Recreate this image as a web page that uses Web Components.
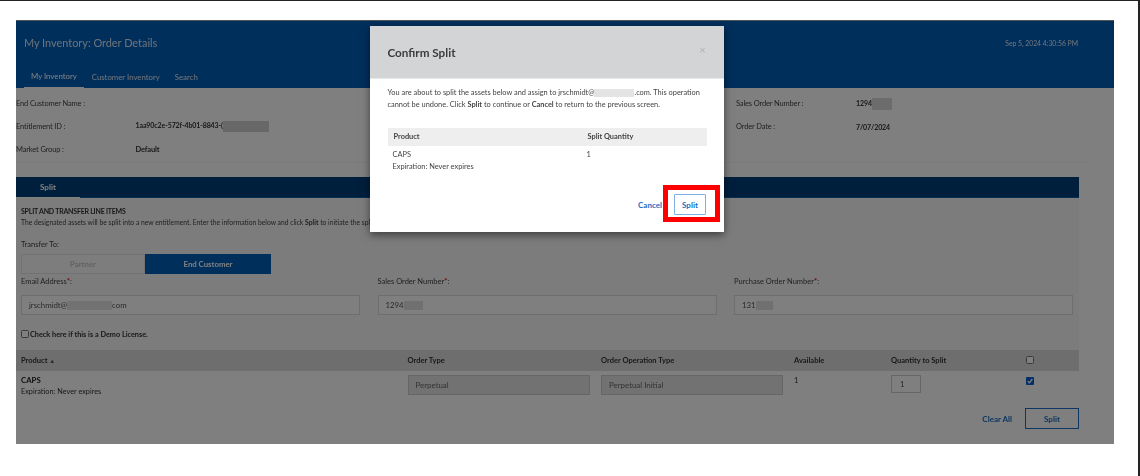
<!DOCTYPE html>
<html lang="en"><head><meta charset="utf-8"><title>Confirm Split</title>
<style>
html,body{margin:0;padding:0;background:#fff}
body{font-family:Lato,"Liberation Sans",sans-serif;font-size:8px;color:#333}
</style></head>
<body>
<inv-frame>
  <inv-app>
    <inv-header slot="top" heading="My Inventory: Order Details" stamp="Sep 5, 2024 4:30:56 PM"></inv-header>
    <inv-info></inv-info>
    <inv-split></inv-split>
    <inv-lines></inv-lines>
    <inv-confirm></inv-confirm>
  </inv-app>
</inv-frame>
<script>
function def(name, css, html, setup){
  customElements.define(name, class extends HTMLElement{
    constructor(){super();const s=this.attachShadow({mode:'open'});
      s.innerHTML='<style>'+css+'</style>'+(typeof html==='function'?html(this):html);}
    connectedCallback(){ if(setup) setup(this); }
  });
}
const redact=(w,h,c)=>`<span style="display:inline-block;vertical-align:middle;width:${w}px;height:${h}px;background:${c}"></span>`;
const soft='filter:blur(.3px);';

def('inv-frame',`:host{display:block;box-sizing:border-box;width:1140px;height:476px;border-top:1px solid #222;border-right:2px solid #222;padding:19px 24px 0 16px}`,`<slot></slot>`);
def('inv-app',`:host{display:block;position:relative;height:423px;border-top:1px solid #555;background:#fff;font-family:Lato,"Liberation Sans",sans-serif;color:#444}`,`<slot name="top"></slot><slot></slot>`);

def('inv-header',`:host{display:flex;flex-direction:column;height:67px;box-sizing:border-box;background:#005eb8;padding:0 36px 0 8px;color:#fff;${soft}}
.top{display:flex;justify-content:space-between;align-items:center;height:43px}
h1{margin:0;font-size:10.9px;font-weight:400;color:#d8e4f2}
.st{font-size:6.8px;color:#dfe8f4}
nav{display:flex;margin-top:auto;height:23px}
a{display:flex;align-items:center;padding:0 7px;font-size:7.8px;color:#dfe8f4;box-sizing:border-box;margin-right:1px}
a.on{border-bottom:1px solid #fff;color:#fff}`,
el=>`<div class="top"><h1>${el.getAttribute('heading')}</h1><span class="st">${el.getAttribute('stamp')}</span></div>
<nav><a class="on">My Inventory</a><a>Customer Inventory</a><a>Search</a></nav>`);

def('inv-info',`:host{display:grid;grid-template-columns:119.5px 600.5px 120px 1fr;grid-auto-rows:23px;box-sizing:border-box;width:1071px;height:75px;padding-top:4px;border-bottom:1px solid #f4f4f4;font-size:7.5px;letter-spacing:-.15px;align-items:center;${soft}}
.v{font-weight:700;color:#333}.k{color:#444}.n{font-size:7px;letter-spacing:-.1px}`,
`<span class="k">End Customer Name :</span><span></span><span class="k">Sales Order Number :</span><span class="v n">1294${redact(20,12,'#d8d8d8')}</span>
<span class="k">Entitlement ID :</span><span class="v n">1aa90c2e-572f-4b01-8843-(${redact(46,11,'#d0d0d0')}</span><span class="k">Order Date :</span><span class="v n">7/07/2024</span>
<span class="k">Market Group :</span><span class="v">Default</span><span></span><span></span>`);

def('inv-split',`:host{display:block;box-sizing:border-box;width:1063px;margin-top:14px;background:#f8f8f8;height:173px;font-size:7.5px;color:#444;${soft}}
.bar{height:21px;background:#003f78;box-sizing:border-box;border-bottom:1px solid #0a5ca8}
.tab{display:flex;align-items:center;justify-content:center;width:64px;height:21px;box-sizing:border-box;border-bottom:1px solid #fff;color:#fff;font-weight:700;font-size:8px}
.b{padding:8px 5px 0;display:flex;flex-direction:column}
.t{font-weight:700;font-size:7px;letter-spacing:-.22px;color:#333;line-height:10px;margin-bottom:1px}
.d{line-height:10px;font-size:6.76px;white-space:nowrap}
.d b,.l b{font-weight:700}
.l{line-height:10px}
.tt{margin-top:13px}
.tog{display:flex;width:250px;height:20px;margin-top:4px;font-weight:700;font-size:7.8px}
.tog span{flex:1;display:flex;align-items:center;justify-content:center;box-sizing:border-box}
.tog .p{border:1px solid #e4e4e4;background:#fbfbfb;color:#c4c4c4;flex:none;width:124px}
.e{background:#005eb8;color:#fff}
.fs{display:grid;grid-template-columns:339px 339px 339px;column-gap:17.5px;margin-top:3px}
.fs i{color:#d00;font-style:normal;font-weight:700}
.in{display:flex;align-items:center;height:20px;margin-top:8px;padding:0 7px;border:1px solid #dcdcdc;background:#fff;box-sizing:border-box;font-size:7.8px;color:#555}
.ck{display:flex;align-items:center;margin-top:14px;height:10px;font-weight:700;color:#333;font-size:7.3px}
.box{box-sizing:border-box;width:8px;height:8px;border:1px solid #777;border-radius:1.5px;background:#fff;margin-right:1px}`,
`<div class="bar"><div class="tab">Split</div></div>
<div class="b">
<div class="t">SPLIT AND TRANSFER LINE ITEMS</div>
<div class="d">The designated assets will be split into a new entitlement. Enter the information below and click <b>Split</b> to initiate the split process.</div>
<div class="l tt">Transfer To:</div>
<div class="tog"><span class="p">Partner</span><span class="e">End Customer</span></div>
<div class="fs">
<div><div class="l">Email Address<i>*</i>:</div><div class="in">jrschmidt@${redact(45,9,'#e4e4e4')}com</div></div>
<div><div class="l">Sales Order Number<i>*</i>:</div><div class="in">1294${redact(19,9,'#e0e0e0')}</div></div>
<div><div class="l">Purchase Order Number<i>*</i>:</div><div class="in">131${redact(17,9,'#e0e0e0')}</div></div>
</div>
<div class="ck"><span class="box"></span>Check here if this is a Demo License.</div>
</div>`);

def('inv-lines',`:host{display:block;font-size:7.5px;color:#333;${soft}}
.g{display:grid;grid-template-columns:386.5px 193.5px 193px 97px 135px 1fr;padding-left:5px;width:1058px;box-sizing:border-box}
.h{height:21px;background:#dcdcde;align-items:center;width:1063px;font-weight:700}
.r{height:37px;padding-top:4px;align-items:start}
.n{line-height:11px;font-size:7.3px}
.n b{color:#222;font-size:7.8px}
.ex{color:#333}
.ro{display:flex;align-items:center;box-sizing:border-box;width:182px;height:20px;padding:0 7px;border:1px solid #ccc;background:#e4e4e4;color:#666;font-size:7.9px}
.q{display:flex;align-items:center;box-sizing:border-box;width:30px;height:18px;padding:0 8px;border:1px solid #ccc;background:#fff;color:#444}
.cb{display:block;box-sizing:border-box;width:8px;height:8px;border:1px solid #777;border-radius:1.5px;background:#fff;margin-top:-2px}
.ckd{width:8px;height:8px;margin-top:2px}
.f{display:flex;justify-content:flex-end;align-items:center;width:1063px;height:21px;font-weight:700;color:#1a6cc0;font-size:8px}
.btn{display:flex;align-items:center;justify-content:center;width:54px;height:21px;margin-left:13px;box-sizing:border-box;border:1px solid #1a6cc0;background:#fff}
.av{padding-top:1px}
.so{font-size:6px;color:#555}`,
`<div class="g h"><span>Product <span class="so">▲</span></span><span>Order Type</span><span>Order Operation Type</span><span>Available</span><span>Quantity to Split</span><span class="cb"></span></div>
<div class="g r"><div class="n"><b>CAPS</b><br><span class="ex">Expiration: Never expires</span></div><div class="ro">Perpetual</div><div class="ro">Perpetual Initial</div><div class="av">1</div><div class="q">1</div>
<svg class="ckd" viewBox="0 0 8 8"><rect width="8" height="8" rx="1" fill="#0a5fd0"/><path d="M1.8 4.2 3.4 5.8 6.3 2" fill="none" stroke="#fff" stroke-width="1.3"/></svg></div>
<div class="f"><span>Clear All</span><span class="btn">Split</span></div>`);

def('inv-confirm',`:host{position:absolute;inset:0;background:rgba(0,0,0,.5);display:block}
.m{position:absolute;left:353.5px;top:5px;width:354.5px;height:206px;background:#fff;box-shadow:0 3px 8px rgba(0,0,0,.5);color:#444;font-size:7.4px;display:flex;flex-direction:column}
.hd{display:flex;justify-content:space-between;height:53px;box-sizing:border-box;background:#d3d4d6;border-bottom:1px solid #e8e8e8;padding:0 18px;align-items:center;${soft}}
h2{margin:0;font-size:11.7px;font-weight:700;color:#3c3c3c}
.x{font-size:12px;color:#b4b4b4;margin-bottom:6px}
.bd{padding:8px 18px 0;line-height:11.5px;${soft}}
.bd b{font-weight:700}
.ln{white-space:nowrap}
table{border-collapse:collapse;width:319px;margin-top:18px;table-layout:fixed}
th{background:#eeeeef;height:18px;text-align:left;font-weight:700;padding:0 6px;color:#444}
td{padding:3px 5px;vertical-align:top;line-height:11.5px}
.ft{position:relative;display:flex;justify-content:flex-end;align-items:center;margin:auto 18px 17px;height:21px;font-weight:700;color:#1a6cc0;font-size:8px}
.ok{display:flex;align-items:center;justify-content:center;width:32px;height:21px;margin-left:12px;box-sizing:border-box;border:1px solid #7fb0e0;background:#fff;border-radius:1px}
.mark{position:absolute;right:-14px;top:-9px;width:57px;height:37px;box-sizing:border-box;border:5.5px solid #f00}`,
`<div class="m" role="dialog">
<div class="hd"><h2>Confirm Split</h2><span class="x">×</span></div>
<div class="bd"><div class="ln">You are about to split the assets below and assign to jrschmidt@${redact(40,8,'#e4e4e4')}.com. This operation</div><div class="ln">cannot be undone. Click <b>Split</b> to continue or <b>Cancel</b> to return to the previous screen.</div>
<table><colgroup><col style="width:194px"><col></colgroup><tr><th>Product</th><th>Split Quantity</th></tr><tr><td><div>CAPS</div><div>Expiration: Never expires</div></td><td>1</td></tr></table></div>
<div class="ft"><span>Cancel</span><span class="ok">Split</span><span class="mark"></span></div>
</div>`);
</script>
</body></html>
